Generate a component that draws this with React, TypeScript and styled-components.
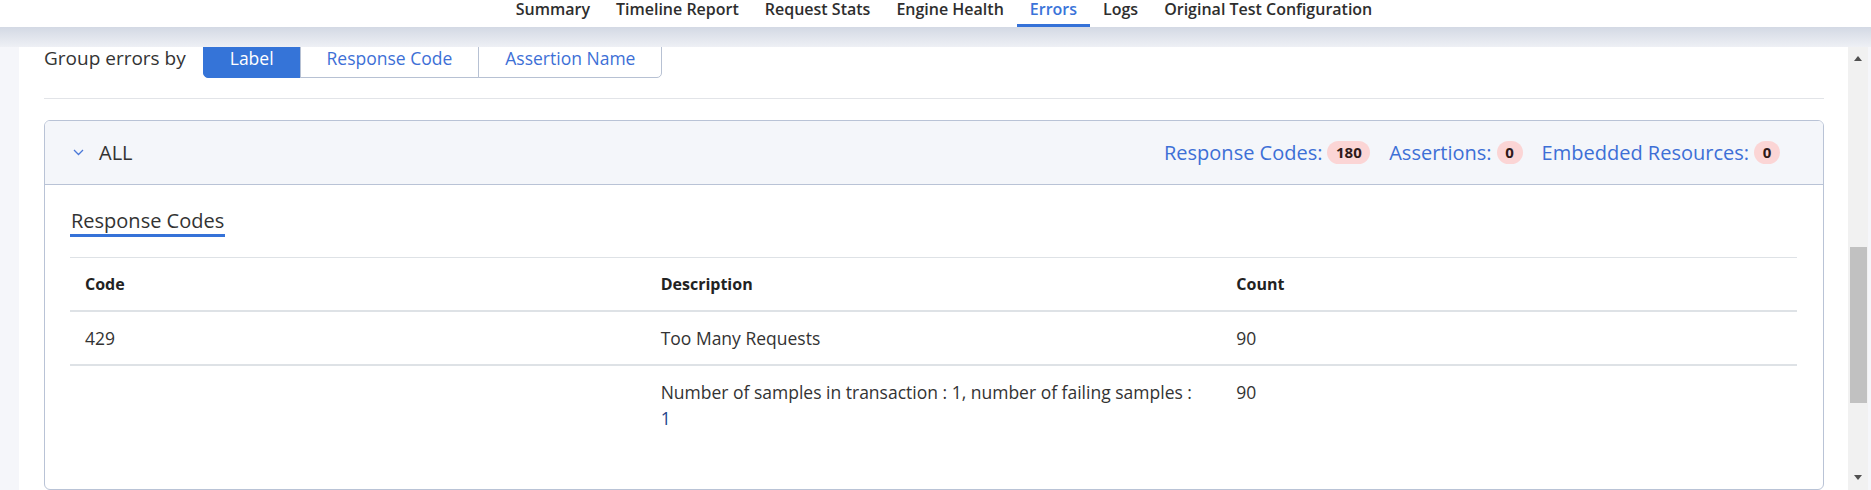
import React, { useLayoutEffect, useRef, useState } from "react";
import styled, { createGlobalStyle } from "styled-components";

const Global = createGlobalStyle`
  html, body { margin: 0; padding: 0; height: 100%; overflow: hidden; background: #f5f6fa; }
  body { font-family: "Open Sans", "Noto Sans", sans-serif; color: #333; }
  * { box-sizing: border-box; }
`;

const Page = styled.div`
  height: 490px;
  display: flex;
  flex-direction: column;
  background: #f5f6fa;
`;

const Header = styled.header`
  flex: none;
  height: 27px;
  background: #fff;
  display: flex;
  justify-content: center;
  padding-left: 17px;
`;

const NavItem = styled.a<{ $active?: boolean }>`
  height: 27px;
  padding: 0 13px;
  font-size: 16px;
  font-weight: 600;
  line-height: 18px;
  color: ${(p) => (p.$active ? "#3a73d9" : "#2e2e2e")};
  border-bottom: 3px solid ${(p) => (p.$active ? "#3572d8" : "transparent")};
  text-decoration: none;
  white-space: nowrap;
`;

const HeaderShade = styled.div`
  flex: none;
  height: 20px;
  background: linear-gradient(#d3d9e4, #eef0f5);
`;

const Body = styled.div`
  flex: 1;
  min-height: 0;
  display: flex;
  padding-right: 3px;
`;

const ScrollArea = styled.main`
  flex: 1;
  min-width: 0;
  overflow-y: scroll;
  padding-left: 19px;
  background: #f5f6fa;
  scrollbar-width: none;
  &::-webkit-scrollbar { display: none; }
`;

const Scrollbar = styled.div`
  flex: none;
  width: 20px;
  display: flex;
  flex-direction: column;
  background: #f1f1f1;
`;

const ScrollButton = styled.div<{ $down?: boolean }>`
  flex: none;
  height: 17px;
  display: flex;
  justify-content: center;
  align-items: ${(p) => (p.$down ? "flex-start" : "flex-end")};
  padding: ${(p) => (p.$down ? "2px 0 0" : "0 0 3px")};
  &::before {
    content: "";
    width: 0;
    height: 0;
    border-left: 4.5px solid transparent;
    border-right: 4.5px solid transparent;
    ${(p) =>
      p.$down ? "border-top: 5px solid #505050;" : "border-bottom: 5px solid #505050;"}
  }
`;

const Track = styled.div`
  flex: 1;
  position: relative;
`;

const Thumb = styled.div`
  position: absolute;
  left: 2px;
  right: 1px;
  background: #c1c1c1;
`;

const Spacer = styled.div<{ $h: number }>`
  height: ${(p) => p.$h}px;
`;

const Card = styled.section`
  background: #fff;
  padding: 16px 24px 24px 25px;
`;

const GroupRow = styled.div`
  display: flex;
  align-items: center;
  gap: 17px;
  padding-bottom: 20px;
  border-bottom: 1px solid #e2e4e8;
`;

const GroupLabel = styled.span`
  font-size: 19px;
  color: #333;
`;

const Segmented = styled.div`
  display: flex;
`;

const SegButton = styled.button<{ $active?: boolean }>`
  height: 40px;
  padding: 0 26px;
  font-family: inherit;
  font-size: 17.5px;
  border: 1px solid ${(p) => (p.$active ? "#3574d8" : "#b7c1d3")};
  background: ${(p) => (p.$active ? "#3574d8" : "#fff")};
  color: ${(p) => (p.$active ? "#fff" : "#3d6fd6")};
  margin-left: -1px;
  cursor: pointer;
  &:first-child { margin-left: 0; border-radius: 5px 0 0 5px; }
  &:last-child { border-radius: 0 5px 5px 0; }
`;

const Panel = styled.div`
  margin-top: 21px;
  border: 1px solid #b9c3d6;
  border-radius: 6px;
  overflow: hidden;
`;

const PanelHeader = styled.div`
  height: 64px;
  background: #f4f6fa;
  border-bottom: 1px solid #b9c3d6;
  display: flex;
  align-items: center;
  justify-content: space-between;
  padding: 0 43px 0 28px;
`;

const HeaderLeft = styled.div`
  display: flex;
  align-items: center;
  gap: 15px;
`;

const PanelTitle = styled.span`
  font-size: 20px;
  color: #333;
`;

const Stats = styled.div`
  display: flex;
  align-items: center;
  gap: 19px;
`;

const Stat = styled.span`
  display: flex;
  align-items: center;
  gap: 5px;
  font-size: 20px;
  color: #3d6fd6;
`;

const Badge = styled.span`
  height: 23px;
  min-width: 26px;
  padding: 0 8.5px;
  border-radius: 12px;
  background: #fbd5d5;
  color: #2e1a1a;
  font-size: 15px;
  font-weight: 700;
  line-height: 23px;
  text-align: center;
`;

const PanelBody = styled.div`
  padding: 23px 26px 45px 25px;
`;

const TabTitle = styled.span`
  display: inline-block;
  font-size: 20px;
  line-height: 26px;
  padding: 0 1px;
  color: #333;
  border-bottom: 3px solid #3572d8;
`;

const Table = styled.table`
  margin-top: 20px;
  width: 100%;
  border-collapse: collapse;
  table-layout: fixed;
`;

const Th = styled.th`
  text-align: left;
  font-size: 16px;
  font-weight: 700;
  color: #222;
  padding: 13px 15px;
  line-height: 26px;
  border-top: 1px solid #dee2e6;
  border-bottom: 2px solid #dee2e6;
`;

const Td = styled.td`
  font-size: 17.5px;
  color: #333;
  padding: 13px 15px;
  line-height: 26px;
  vertical-align: top;
  border-top: 2px solid #dee2e6;
`;

const SubValue = styled.div`
  color: #24438a;
`;

const Chevron = () => (
  <svg width="11" height="7" viewBox="0 0 11 7" fill="none">
    <polyline points="1,1 5.5,5.5 10,1" stroke="#4a78d8" strokeWidth="1.3" />
  </svg>
);

const navItems = [
  "Summary",
  "Timeline Report",
  "Request Stats",
  "Engine Health",
  "Errors",
  "Logs",
  "Original Test Configuration",
];

export default function App() {
  const scrollRef = useRef<HTMLElement>(null);
  const trackRef = useRef<HTMLDivElement>(null);
  const [thumb, setThumb] = useState({ top: 0, height: 0 });

  useLayoutEffect(() => {
    const el = scrollRef.current;
    const tr = trackRef.current;
    if (!el || !tr) return;
    el.scrollTop = 520;
    const track = tr.clientHeight;
    const h = Math.max(20, (track * el.clientHeight) / el.scrollHeight);
    const maxScroll = el.scrollHeight - el.clientHeight;
    const top = maxScroll > 0 ? ((track - h) * el.scrollTop) / maxScroll : 0;
    setThumb({ top, height: h });
  }, []);

  return (
    <>
      <Global />
      <Page>
        <Header>
          {navItems.map((n) => (
            <NavItem key={n} $active={n === "Errors"}>
              {n}
            </NavItem>
          ))}
        </Header>
        <HeaderShade />
        <Body>
          <ScrollArea ref={scrollRef}>
            <Spacer $h={495} />
            <Card>
              <GroupRow>
                <GroupLabel>Group errors by</GroupLabel>
                <Segmented>
                  <SegButton $active>Label</SegButton>
                  <SegButton>Response Code</SegButton>
                  <SegButton>Assertion Name</SegButton>
                </Segmented>
              </GroupRow>
              <Panel>
                <PanelHeader>
                  <HeaderLeft>
                    <Chevron />
                    <PanelTitle>ALL</PanelTitle>
                  </HeaderLeft>
                  <Stats>
                    <Stat>
                      Response Codes: <Badge>180</Badge>
                    </Stat>
                    <Stat>
                      Assertions: <Badge>0</Badge>
                    </Stat>
                    <Stat>
                      Embedded Resources: <Badge>0</Badge>
                    </Stat>
                  </Stats>
                </PanelHeader>
                <PanelBody>
                  <TabTitle>Response Codes</TabTitle>
                  <Table>
                    <thead>
                      <tr>
                        <Th>Code</Th>
                        <Th>Description</Th>
                        <Th>Count</Th>
                      </tr>
                    </thead>
                    <tbody>
                      <tr>
                        <Td>429</Td>
                        <Td>Too Many Requests</Td>
                        <Td>90</Td>
                      </tr>
                      <tr>
                        <Td></Td>
                        <Td>
                          Number of samples in transaction : 1, number of failing samples :
                          <SubValue>1</SubValue>
                        </Td>
                        <Td>90</Td>
                      </tr>
                    </tbody>
                  </Table>
                </PanelBody>
              </Panel>
            </Card>
            <Spacer $h={175} />
          </ScrollArea>
          <Scrollbar>
            <ScrollButton />
            <Track ref={trackRef}>
              <Thumb style={{ top: thumb.top, height: thumb.height }} />
            </Track>
            <ScrollButton $down />
          </Scrollbar>
        </Body>
      </Page>
    </>
  );
}
